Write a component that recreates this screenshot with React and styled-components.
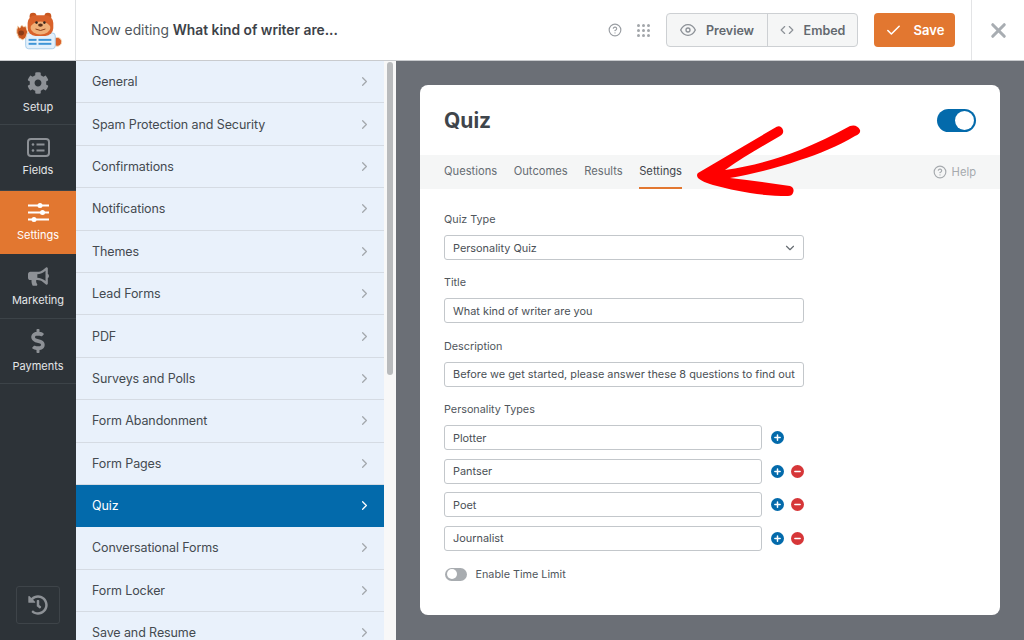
import React from 'react';
import styled, { createGlobalStyle } from 'styled-components';
import { FaCog, FaBullhorn, FaDollarSign, FaHistory } from 'react-icons/fa';
import { FiChevronRight, FiChevronDown, FiEye, FiCode, FiCheck, FiX, FiHelpCircle, FiPlus, FiMinus } from 'react-icons/fi';

const colors = {
    orange: '#e27730',
    blue: '#036aab',
    red: '#d63638',
    dark: '#2d3338',
    menu: '#e9f1fb',
    canvas: '#6b6f76',
    text: '#444a50',
    line: '#cfd3d7',
};

const GlobalStyle = createGlobalStyle`
    html, body { margin: 0; height: 100%; overflow: hidden; }
    body { font-family: Inter, "Liberation Sans", sans-serif; color: ${colors.text}; }
    * { box-sizing: border-box; }
`;

function FieldsIcon() {
    return (
        <svg width="23" height="19" viewBox="0 0 23 19" fill="none">
            <rect x="1" y="1" width="21" height="17" rx="3" stroke="currentColor" strokeWidth="2" />
            <circle cx="6" cy="6.500" r="1.300" fill="currentColor" />
            <circle cx="6" cy="12.500" r="1.300" fill="currentColor" />
            <path d="M9.500 6.500h8M9.500 12.500h8" stroke="currentColor" strokeWidth="2" />
        </svg>
    );
}

function SlidersIcon() {
    return (
        <svg width="21" height="19" viewBox="0 0 21 19" fill="currentColor">
            <path d="M0 2.500h21M0 9.500h21M0 16.500h21" stroke="currentColor" strokeWidth="2" />
            <circle cx="12" cy="2.500" r="2.500" />
            <circle cx="14.500" cy="9.500" r="2.500" />
            <circle cx="6" cy="16.500" r="2.500" />
        </svg>
    );
}

const sideItems = [
    { label: 'Setup', icon: <FaCog size={22} />, height: 64 },
    { label: 'Fields', icon: <FieldsIcon />, height: 66 },
    { label: 'Settings', icon: <SlidersIcon />, height: 63, active: true },
    { label: 'Marketing', icon: <FaBullhorn size={21} />, height: 65 },
    { label: 'Payments', icon: <FaDollarSign size={24} />, height: 65 },
];

const menuItems = [
    'General', 'Spam Protection and Security', 'Confirmations', 'Notifications', 'Themes', 'Lead Forms', 'PDF',
    'Surveys and Polls', 'Form Abandonment', 'Form Pages', 'Quiz', 'Conversational Forms', 'Form Locker', 'Save and Resume',
];

const types = ['Plotter', 'Pantser', 'Poet', 'Journalist'];

function Bear() {
    return (
        <svg width="76" height="60" viewBox="0 0 76 60">
            <circle cx="58" cy="42" r="4.500" fill="#d9622b" stroke="#f6d9b8" />
            <rect x="26" y="33" width="30" height="16" rx="3" fill="#e3f0fb" stroke="#a9cdea" />
            <rect x="29" y="39" width="8" height="2" fill="#3f95d6" />
            <rect x="39" y="39" width="13" height="2" fill="#3f95d6" />
            <rect x="29" y="43" width="8" height="2" fill="#3f95d6" />
            <rect x="39" y="43" width="13" height="2" fill="#3f95d6" />
            <circle cx="33.500" cy="16" r="3.500" fill="#c9571f" />
            <circle cx="48.500" cy="16" r="3.500" fill="#c9571f" />
            <rect x="28" y="15" width="26" height="21" rx="8" fill="#d9622b" />
            <ellipse cx="41" cy="28" rx="10" ry="6.500" fill="#f0b078" />
            <circle cx="37" cy="22.500" r="1.300" fill="#33261f" />
            <circle cx="45" cy="22.500" r="1.300" fill="#33261f" />
            <ellipse cx="41" cy="25" rx="2.400" ry="1.600" fill="#5a2f1a" />
            <path d="M36 29q5 3 10 0" stroke="#8a3c17" strokeWidth="1" fill="none" />
            <path d="M17 30l1-4 2 2 2-3 2 2 2-1 2 6-2 6-3 2-4-2-2-5z" fill="#c9571f" stroke="#f6d9b8" />
            <ellipse cx="21.500" cy="33" rx="2.800" ry="2.500" fill="#8a3c17" />
        </svg>
    );
}

function Arrow() {
    return (
        <ArrowOverlay width="170" height="80" viewBox="0 0 170 80">
            <path
                fill="#ff0000"
                d="M1 48L79.700 1.700Q84 0 86 5Q87 9 83 11C64 22 45 33 28 45C55 41 80 34 103 25C120 18 137 10 153 1Q160 -1 163 5Q164 9 158 11C141 21 122 29 103 35C80 43 56 49 33 53C52 55 72 58 93 61Q98 63 96 68Q95 71 91 71C78 71 65 70 53 68C40 66 28 63 16 60C10 58 4 56 1 53Q-1 50 1 48Z"
            />
        </ArrowOverlay>
    );
}

function Field({ label, children }) {
    return (
        <FieldBlock>
            <Label>{label}</Label>
            {children}
        </FieldBlock>
    );
}

export default function App() {
    return (
        <Page>
            <GlobalStyle />
            <Header>
                <LogoCell><Bear /></LogoCell>
                <Title>Now editing <b>What kind of writer are...</b></Title>
                <HeaderTools>
                    <FiHelpCircle size={14} color="#9a9ea3" />
                    <Dots>
                        {Array.from({ length: 9 }).map((_, i) => <i key={i} />)}
                    </Dots>
                    <ButtonGroup>
                        <GroupButton $width={100}><FiEye size={16} color="#8c9197" />Preview</GroupButton>
                        <GroupButton $width={90}><FiCode size={14} color="#8c9197" />Embed</GroupButton>
                    </ButtonGroup>
                    <SaveButton><FiCheck size={17} strokeWidth={2.2} />Save</SaveButton>
                </HeaderTools>
                <CloseCell><FiX size={23} strokeWidth={3.2} /></CloseCell>
            </Header>
            <Body>
                <Sidebar>
                    {sideItems.map((item) => (
                        <SideItem key={item.label} $active={item.active} $height={item.height}>
                            {item.icon}
                            <span>{item.label}</span>
                        </SideItem>
                    ))}
                    <HistoryButton><FaHistory size={20} /></HistoryButton>
                </Sidebar>
                <MenuPanel>
                    <Menu>
                        {menuItems.map((item) => (
                            <MenuRow key={item} $active={item === 'Quiz'}>
                                {item}
                                <FiChevronRight size={15} />
                            </MenuRow>
                        ))}
                    </Menu>
                    <Track><Thumb /></Track>
                </MenuPanel>
                <Canvas>
                    <Card>
                        <CardHead>
                            <CardTitle>Quiz</CardTitle>
                            <Toggle />
                        </CardHead>
                        <Tabs>
                            <Tab>Questions</Tab>
                            <Tab>Outcomes</Tab>
                            <Tab>Results</Tab>
                            <Tab $active>Settings</Tab>
                            <Help><FiHelpCircle size={14} />Help</Help>
                        </Tabs>
                        <Arrow />
                        <Form>
                            <Field label="Quiz Type">
                                <Input>Personality Quiz<SelectChevron size={14} /></Input>
                            </Field>
                            <Field label="Title">
                                <Input>What kind of writer are you</Input>
                            </Field>
                            <Field label="Description">
                                <Input>Before we get started, please answer these 8 questions to find out</Input>
                            </Field>
                            <Label>Personality Types</Label>
                            <TypeList>
                                {types.map((type, i) => (
                                    <TypeRow key={type}>
                                        <TypeInput>{type}</TypeInput>
                                        <RoundButton $color={colors.blue}><FiPlus size={9} strokeWidth={4} /></RoundButton>
                                        {i > 0 && <RoundButton $color={colors.red}><FiMinus size={9} strokeWidth={4} /></RoundButton>}
                                    </TypeRow>
                                ))}
                            </TypeList>
                            <LimitRow>
                                <SmallToggle />
                                Enable Time Limit
                            </LimitRow>
                        </Form>
                    </Card>
                </Canvas>
            </Body>
        </Page>
    );
}

const Page = styled.div`
    width: 1024px;
    height: 640px;
    display: flex;
    flex-direction: column;
    overflow: hidden;
`;

const Header = styled.header`
    height: 61px;
    flex: none;
    display: flex;
    align-items: stretch;
    background: #fff;
    border-bottom: 1px solid #c9cbce;
`;

const LogoCell = styled.div`
    width: 76px;
    display: flex;
    border-right: 1px solid #dfe1e3;
`;

const Title = styled.div`
    margin-left: 15px;
    align-self: center;
    font-size: 13.800px;
    color: #50565c;

    b {
        font-weight: 600;
        color: #3d4248;
    }
`;

const HeaderTools = styled.div`
    margin-left: auto;
    display: flex;
    align-items: center;
`;

const Dots = styled.div`
    width: 13px;
    margin: 0 16px 0 15px;
    display: grid;
    grid-template-columns: repeat(3, 3px);
    gap: 2px;

    i {
        height: 3px;
        border-radius: 50%;
        background: #a2a6aa;
    }
`;

const ButtonGroup = styled.div`
    display: flex;
    height: 34px;
    background: #f5f6f6;
    border: 1px solid #cdd0d3;
    border-radius: 4px;
`;

const GroupButton = styled.div`
    width: ${(p) => p.$width}px;
    display: flex;
    align-items: center;
    justify-content: center;
    gap: 10px;
    font-size: 12.500px;
    font-weight: 600;
    color: #63696f;

    & + & {
        border-left: 1px solid #cdd0d3;
    }
`;

const SaveButton = styled.div`
    width: 81px;
    height: 34px;
    margin: 0 16px;
    display: flex;
    align-items: center;
    justify-content: center;
    gap: 12px;
    background: ${colors.orange};
    border-radius: 4px;
    font-size: 13px;
    font-weight: 600;
    color: #fff;
`;

const CloseCell = styled.div`
    width: 53px;
    display: flex;
    align-items: center;
    justify-content: center;
    color: #a8adb2;
    border-left: 1px solid #e3e4e6;
`;

const Body = styled.div`
    flex: 1;
    min-height: 0;
    display: flex;
`;

const Sidebar = styled.nav`
    width: 76px;
    flex: none;
    display: flex;
    flex-direction: column;
    background: ${colors.dark};
`;

const SideItem = styled.div`
    height: ${(p) => p.$height}px;
    display: flex;
    flex-direction: column;
    align-items: center;
    justify-content: center;
    gap: 6px;
    font-size: 11px;
    color: ${(p) => (p.$active ? '#fff' : '#e4e6e8')};
    background: ${(p) => (p.$active ? colors.orange : 'transparent')};
    border-bottom: 1px solid ${(p) => (p.$active ? colors.orange : '#3c4348')};

    svg {
        color: ${(p) => (p.$active ? '#fff' : '#8d9196')};
    }
`;

const HistoryButton = styled.div`
    width: 44px;
    height: 38px;
    margin: auto auto 16px;
    display: flex;
    align-items: center;
    justify-content: center;
    color: #8d9196;
    border: 1px solid #3e4449;
    border-radius: 3px;
`;

const MenuPanel = styled.div`
    width: 320px;
    flex: none;
    display: flex;
`;

const Menu = styled.div`
    width: 308px;
    overflow: hidden;
    background: ${colors.menu};
`;

const MenuRow = styled.div`
    height: 42.400px;
    padding: 0 12px 0 16px;
    display: flex;
    align-items: center;
    justify-content: space-between;
    font-size: 12.500px;
    letter-spacing: -0.1px;
    color: ${(p) => (p.$active ? '#fff' : colors.text)};
    background: ${(p) => (p.$active ? colors.blue : 'transparent')};
    border-bottom: 1px solid ${(p) => (p.$active ? colors.blue : '#d5dbe3')};

    svg {
        color: ${(p) => (p.$active ? '#fff' : '#a3a8ad')};
    }
`;

const Track = styled.div`
    width: 12px;
    padding: 1px 3px;
    background: #f8f8f8;
`;

const Thumb = styled.div`
    height: 313px;
    border-radius: 3px;
    background: #b9bbbd;
`;

const Canvas = styled.main`
    flex: 1;
    padding: 24px;
    background: ${colors.canvas};
`;

const Card = styled.section`
    position: relative;
    height: 530px;
    background: #fff;
    border-radius: 8px;
`;

const ArrowOverlay = styled.svg`
    position: absolute;
    left: 277px;
    top: 40px;
    overflow: visible;
`;

const CardHead = styled.div`
    height: 70px;
    padding: 0 24px;
    display: flex;
    align-items: center;
    justify-content: space-between;
`;

const CardTitle = styled.h2`
    margin: 0;
    font-size: 21px;
    font-weight: 700;
    color: #3f454b;
`;

const Toggle = styled.div`
    position: relative;
    width: 39px;
    height: 23px;
    border-radius: 12px;
    background: ${colors.blue};

    &::after {
        content: '';
        position: absolute;
        right: 2px;
        top: 2px;
        width: 19px;
        height: 19px;
        border-radius: 50%;
        background: #fff;
    }
`;

const Tabs = styled.div`
    height: 34px;
    padding: 0 24px;
    display: flex;
    align-items: stretch;
    gap: 16.500px;
    background: #f5f6f6;
`;

const Tab = styled.div`
    display: flex;
    align-items: center;
    font-size: 11.200px;
    color: ${(p) => (p.$active ? '#3f454b' : '#666c72')};
    border-bottom: 2px solid ${(p) => (p.$active ? colors.orange : 'transparent')};
`;

const Help = styled.div`
    margin-left: auto;
    display: flex;
    align-items: center;
    gap: 5px;
    font-size: 11.200px;
    color: #a6aaae;
`;

const Form = styled.div`
    padding: 24px 24px 0;
`;

const FieldBlock = styled.div`
    margin-bottom: 16.400px;
`;

const Label = styled.div`
    margin-bottom: 8px;
    font-size: 10.800px;
    line-height: 14px;
    color: #50565c;
`;

const Input = styled.div`
    width: 360px;
    height: 25px;
    padding: 0 4px 0 8px;
    display: flex;
    align-items: center;
    justify-content: space-between;
    font-size: 10.900px;
    white-space: nowrap;
    overflow: hidden;
    color: #4a5056;
    background: #fff;
    border: 1px solid #c3c7cb;
    border-radius: 3px;
`;

const SelectChevron = styled(FiChevronDown)`
    margin-right: 2px;
    color: #666c72;
`;

const TypeList = styled.div`
    display: flex;
    flex-direction: column;
    gap: 8.600px;
`;

const TypeRow = styled.div`
    display: flex;
    align-items: center;
    gap: 7.500px;
`;

const TypeInput = styled(Input)`
    width: 318px;
    margin-right: 1px;
`;

const RoundButton = styled.span`
    width: 13px;
    height: 13px;
    display: flex;
    align-items: center;
    justify-content: center;
    color: #fff;
    background: ${(p) => p.$color};
    border-radius: 50%;
`;

const LimitRow = styled.div`
    margin-top: 17px;
    display: flex;
    align-items: center;
    gap: 8.500px;
    font-size: 10.800px;
    color: #50565c;
`;

const SmallToggle = styled.div`
    position: relative;
    width: 22px;
    height: 13px;
    margin-left: 1px;
    border-radius: 7px;
    background: #a8acb0;

    &::after {
        content: '';
        position: absolute;
        left: 1.500px;
        top: 1.500px;
        width: 10px;
        height: 10px;
        border-radius: 50%;
        background: #fff;
    }
`;
